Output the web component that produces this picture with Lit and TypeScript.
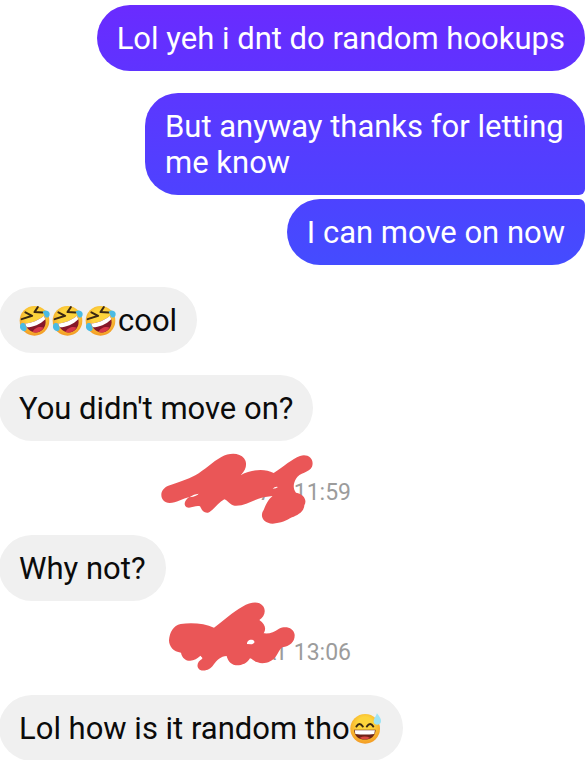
import { LitElement, html, css, svg } from "lit";
import { customElement, property } from "lit/decorators.js";

@customElement("chat-emoji")
class ChatEmoji extends LitElement {
  @property() kind = "rofl";

  static styles = css`
    :host { display: inline-block; vertical-align: middle; margin: -4px 2px 0 0; }
    svg { display: block; width: 31px; height: 31px; overflow: visible; }
  `;

  private rofl() {
    return svg`
      <circle cx="46" cy="47" r="44" fill="url(#face)"/>
      <path d="M18 55 C38 53 58 46 74 32 C84 49 79 70 62 79 C44 87 24 76 18 55Z" fill="#86182a"/>
      <path d="M18 55 C38 53 58 46 74 32 L78 42 C63 57 42 66 23 66Z" fill="#fff"/>
      <path d="M40 80 C45 69 60 62 73 67 C65 80 51 85 40 80Z" fill="#d8394a"/>
      <path d="M19 22 L39 32 L8 42" fill="none" stroke="#3b2813" stroke-width="6" stroke-linecap="round" stroke-linejoin="round"/>
      <path d="M56 6 L46 21 L70 22" fill="none" stroke="#3b2813" stroke-width="6" stroke-linecap="round" stroke-linejoin="round"/>
      <path d="M70 20 C77 14 88 16 91 25 C92 34 86 39 80 37 C74 33 75 26 70 20Z" fill="#4abbe4"/>
      <path d="M17 55 C7 51 2 57 3 67 C5 76 15 81 21 75 C26 68 19 61 17 55Z" fill="#4abbe4"/>`;
  }

  private sweat() {
    return svg`
      <circle cx="45" cy="47" r="44" fill="url(#face)"/>
      <path d="M19 40 Q28 25 38 40 M50 40 Q60 25 69 40" fill="none" stroke="#3b2813" stroke-width="6" stroke-linecap="round"/>
      <path d="M12 50 H76 C75 70 62 79 44 79 C26 79 13 70 12 50Z" fill="#6d2418"/>
      <path d="M14 51 H74 L72 62 Q44 66 16 62Z" fill="#fff"/>
      <path d="M28 74 Q44 66 60 74 Q44 82 28 74Z" fill="#d9483f"/>
      <path d="M80 1 C88 11 94 19 92 27 C88 38 71 37 70 25 C70 17 77 10 80 1Z" fill="#9fe3f3"/>`;
  }

  render() {
    return html`<svg viewBox="0 0 92 92" aria-hidden="true">
      <defs>
        <radialGradient id="face" cx="50%" cy="38%" r="62%">
          <stop offset="0.45" stop-color="#fdd43c"/>
          <stop offset="1" stop-color="#f39a25"/>
        </radialGradient>
      </defs>
      ${this.kind === "rofl" ? this.rofl() : this.sweat()}
    </svg>`;
  }
}

@customElement("app-root")
class AppRoot extends LitElement {
  static styles = css`
    :host {
      display: block;
      background: #fff;
      color: #0b0b0b;
      font-family: Roboto, "Liberation Sans", sans-serif;
      font-size: 31px;
      line-height: 36px;
      overflow: hidden;
    }
    main { display: flex; flex-direction: column; gap: 22px; padding-top: 5px; }
    .group { display: flex; flex-direction: column; gap: 4px; }
    .bubble { margin: 0; padding: 16px 20px 14px; border-radius: 33px; max-width: 460px; }
    .sent { align-self: flex-end; color: #fff; }
    .received { align-self: flex-start; margin-left: -1px; background: #f0f0f0; }
    .first { background: linear-gradient(#6a2bff, #5f33ff); }
    .second { background: linear-gradient(#5c37ff, #4e42ff); border-bottom-right-radius: 6px; max-width: 400px; }
    .third { background: linear-gradient(#4d43ff, #444cff); border-top-right-radius: 6px; }
    .stamped { display: flex; flex-direction: column; }
    .stamp {
      position: relative;
      align-self: center;
      box-sizing: border-box;
      width: 220px;
      height: 94px;
      margin-right: 65px;
      padding: 9px 19px 0 0;
      display: flex;
      align-items: center;
      justify-content: flex-end;
      color: #9c9c9c;
      font-size: 23px;
    }
    .stamp svg { position: absolute; inset: 0; width: 100%; height: 100%; }
    .ink { fill: #ea5657; }
    .gap { fill: #fff; }
  `;

  render() {
    return html`
      <main>
        <p class="bubble sent first">Lol yeh i dnt do random hookups</p>
        <div class="group">
          <p class="bubble sent second">But anyway thanks for letting me know</p>
          <p class="bubble sent third">I can move on now</p>
        </div>
        <p class="bubble received"><chat-emoji></chat-emoji><chat-emoji></chat-emoji><chat-emoji></chat-emoji>cool</p>
        <div class="stamped">
          <p class="bubble received">You didn't move on?</p>
          <div class="stamp">
            <time>AT 11:59</time>
            <svg viewBox="0 -12 660 282" aria-hidden="true">
              <path class="ink" d="M55 122 C85 112 112 104 136 91 C164 75 188 50 214 36 C239 22 269 23 282 40 C293 54 289 74 273 90 C300 75 342 68 371 84 C402 64 426 42 450 33 C475 25 494 43 486 65 C478 83 448 82 438 101 C428 118 430 133 438 143 C462 148 472 165 463 181 C462 201 442 211 426 217 C410 226 393 235 368 236 C340 234 328 214 341 195 C348 179 353 165 368 153 L340 157 C309 164 286 184 254 182 C239 180 233 166 223 163 C204 173 190 197 174 203 C160 205 154 192 150 184 C137 180 124 191 110 187 C99 180 104 165 118 156 C99 160 78 174 59 174 C29 172 24 135 55 122Z"/>
              <path class="gap" d="M118 157 Q132 146 146 146 Q143 153 118 157Z M368 131 Q375 124 384 126 Q379 131 368 131Z"/>
            </svg>
          </div>
          <p class="bubble received">Why not?</p>
          <div class="stamp">
            <time>AT 13:06</time>
            <svg viewBox="0 18 660 282" aria-hidden="true">
              <path class="ink" d="M192 98 C221 77 246 52 277 35 C304 20 326 18 339 33 C350 49 342 66 328 75 C345 87 350 101 341 115 C360 117 372 111 387 101 C407 91 431 98 434 119 C435 141 420 154 397 157 C388 163 385 174 379 182 C367 201 341 209 323 202 C311 199 307 192 300 190 C290 206 275 212 257 211 C239 208 232 192 230 183 C212 184 201 195 190 210 C181 223 164 231 149 224 C138 216 141 199 157 191 L151 184 L137 193 C119 203 97 196 93 173 C70 171 57 154 57 136 C59 112 70 91 92 87 C124 82 165 85 192 98Z"/>
              <path class="gap" d="M291 147 C290 139 299 131 309 135 C318 141 312 147 303 148Z M145 189 L151 182 L158 190Z"/>
            </svg>
          </div>
          <p class="bubble received">Lol how is it random tho<chat-emoji kind="sweat"></chat-emoji></p>
        </div>
      </main>
    `;
  }
}
